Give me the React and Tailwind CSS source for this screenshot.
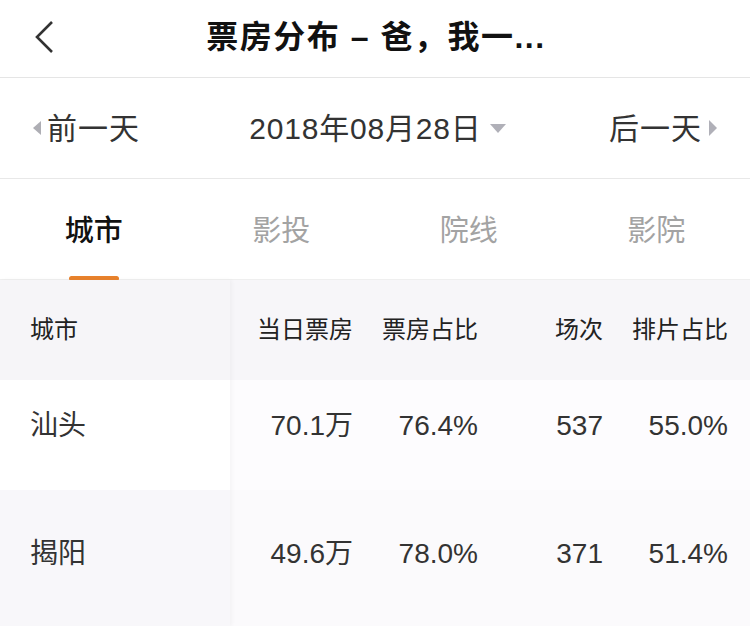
import React from 'react'

const font = { fontFamily: '"Liberation Sans", "Noto Sans CJK SC", sans-serif' }

const rows = [
  { city: '汕头', box: '70.1万', boxRate: '76.4%', shows: '537', showRate: '55.0%', bg: 'bg-white', right: 'bg-[#fdfcfe]', h: 'h-[110px]', pt: 'pb-[18px]' },
  { city: '揭阳', box: '49.6万', boxRate: '78.0%', shows: '371', showRate: '51.4%', bg: 'bg-[#f8f7fa]', right: 'bg-[#fbfafc]', h: 'h-[136px]', pt: 'pb-[8px]' },
]

export default function App() {
  return (
    <div className="w-[750px] h-[626px] overflow-hidden bg-white text-[#222]" style={font}>
      {/* Nav bar */}
      <div className="relative h-[78px] flex items-center justify-center border-b border-[#e5e5e5]">
        <svg className="absolute left-[33px] top-[20px]" width="22" height="34" viewBox="0 0 22 34">
          <path d="M19 2 L4 17 L19 32" fill="none" stroke="#333" strokeWidth="2.6" />
        </svg>
        <h1 className="text-[32px] font-bold text-[#111] tracking-[1.5px] pb-[3px] pl-[2px]">票房分布 – 爸，我一...</h1>
      </div>

      {/* Date switcher */}
      <div className="h-[101px] flex items-center justify-between px-[33px] border-b border-[#e8e8e8] text-[30px] text-[#333]">
        <div className="flex items-center gap-[4px]">
          <span className="w-0 h-0 border-y-[7px] border-y-transparent border-r-[8px] border-r-[#aeaeb4]" />
          <span className="pl-[2px] tracking-[1px]">前一天</span>
        </div>
        <div className="flex items-center gap-[8px] pl-[6px]">
          <span className="tracking-[0.8px]">2018年08月28日</span>
          <span className="w-0 h-0 border-x-[8px] border-x-transparent border-t-[9px] border-t-[#b0b0b8]" />
        </div>
        <div className="flex items-center gap-[7px]">
          <span className="tracking-[1px]">后一天</span>
          <span className="w-0 h-0 border-y-[8px] border-y-transparent border-l-[8px] border-l-[#b0b0b8]" />
        </div>
      </div>

      {/* Tabs */}
      <div className="h-[101px] grid grid-cols-4 border-b border-[#efefef] text-[29px]">
        {['城市', '影投', '院线', '影院'].map((t, i) => (
          <div key={t} className="relative flex items-center justify-center pt-[6px]">
            <span className={i === 0 ? 'text-[#111] font-medium' : 'text-[#a3a3a3]'}>{t}</span>
            {i === 0 && (
              <span className="absolute bottom-[-2px] left-1/2 -translate-x-1/2 w-[50px] h-[5px] rounded-full bg-[#e8822c]" />
            )}
          </div>
        ))}
      </div>

      {/* Table */}
      <div className="flex">
        <div className="w-[230px] shrink-0 relative z-10 shadow-[2px_0_4px_rgba(0,0,0,0.035)]">
          <div className="h-[100px] bg-[#f6f5f8] flex items-center pl-[30px] text-[24px] text-[#222]">城市</div>
          {rows.map(r => (
            <div key={r.city} className={`${r.h} ${r.bg} flex items-center pl-[30px] ${r.pt} text-[28px] text-[#333]`}>{r.city}</div>
          ))}
        </div>
        <div className="flex-1">
          <div className="h-[100px] bg-[#f7f6f9] flex items-center text-[24px] text-[#222]">
            <div className="w-[125px] text-right pr-[2px]">当日票房</div>
            <div className="w-[125px] text-right pr-[2px]">票房占比</div>
            <div className="w-[125px] text-right pr-[2px]">场次</div>
            <div className="w-[125px] text-right pr-[2px]">排片占比</div>
          </div>
          {rows.map(r => (
            <div key={r.city} className={`${r.h} ${r.right} flex items-center ${r.pt} text-[28px] text-[#333]`}>
              <div className="w-[125px] text-right pr-[2px]">{r.box}</div>
              <div className="w-[125px] text-right pr-[2px]">{r.boxRate}</div>
              <div className="w-[125px] text-right pr-[2px]">{r.shows}</div>
              <div className="w-[125px] text-right pr-[2px]">{r.showRate}</div>
            </div>
          ))}
        </div>
      </div>
    </div>
  )
}
